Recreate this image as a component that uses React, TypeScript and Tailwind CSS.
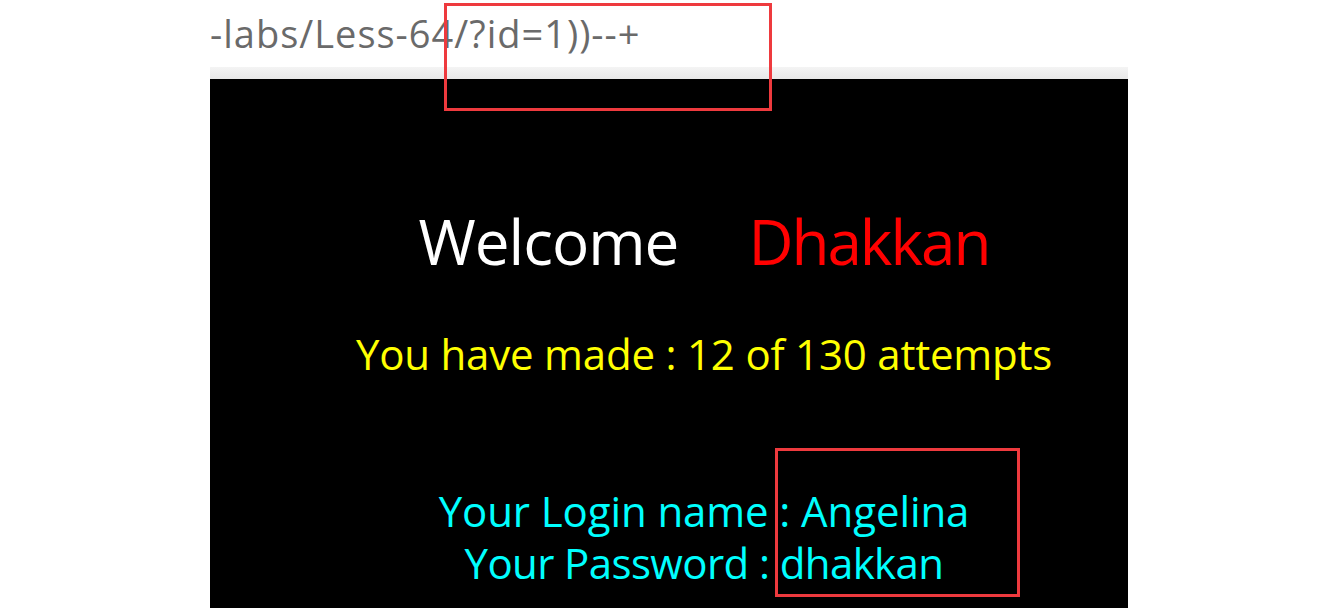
const App = () => {
  return (
    <div className="relative w-[1320px] h-[608px] overflow-hidden bg-white" style={{ fontFamily: '"Open Sans", "Noto Sans", sans-serif' }}>
      <div className="ml-[210px] w-[918px]">
        <div className="h-[67px] pt-[11px] text-[38px] leading-[44px] text-[#6a6a6a] tracking-[1px]">
          -labs/Less-64/?id=1))--+
        </div>
        <div className="h-[12px] bg-gradient-to-b from-[#f4f4f4] to-[#e8e8e8]" />
        <div className="h-[529px] bg-black pl-[70px]">
          <div className="pt-[127px] flex justify-center text-[62px] leading-[70px]">
            <span className="text-white tracking-[-1px]">Welcome</span>
            <span className="ml-[70px] text-[#ff0000] tracking-[-2px]">Dhakkan</span>
          </div>
          <div className="mt-[54px] text-center text-[42px] leading-[48px] text-[#ffff00] tracking-[-0.2px]">
            You have made : 12 of 130 attempts
          </div>
          <div className="mt-[107px] text-center text-[42px] leading-[52px] text-[#00ffff]">
            <div className="tracking-[-0.1px]">Your Login name : Angelina</div>
            <div className="tracking-[-0.6px]">Your Password : dhakkan</div>
          </div>
        </div>
      </div>
      <div className="absolute left-[444px] top-[3px] w-[328px] h-[108px] border-[3px] border-[#ee3a3e]" />
      <div className="absolute left-[775px] top-[448px] w-[245px] h-[149px] border-[3px] border-[#ee3a3e]" />
    </div>
  );
};

export default App;
